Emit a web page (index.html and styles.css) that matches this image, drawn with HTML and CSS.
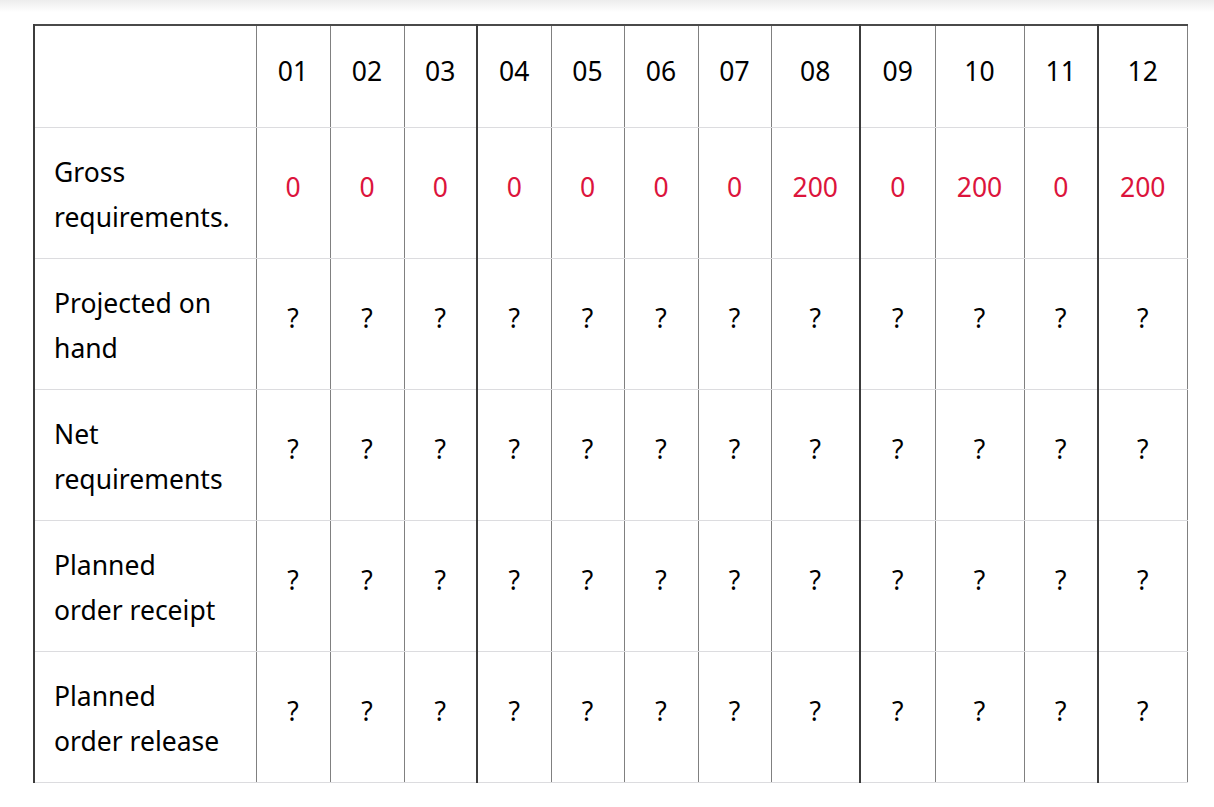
FILE: index.html
```html
<!DOCTYPE html>
<html>
<head>
<meta charset="utf-8">
<link rel="stylesheet" href="styles.css">
</head>
<body>
<div class="topshade"></div>
<div class="wrap">
<table class="mrp">
<colgroup>
<col class="c-label">
<col class="c-n"><col class="c-n"><col class="c-s"><col class="c-n"><col class="c-s"><col class="c-n"><col class="c-s">
<col class="c-w"><col class="c-m"><col class="c-w"><col class="c-n"><col class="c-w">
</colgroup>
<thead>
<tr class="head">
<th class="label"></th>
<th>01</th><th>02</th><th>03</th><th class="q">04</th><th>05</th><th>06</th><th>07</th><th>08</th><th class="q">09</th><th>10</th><th>11</th><th class="q">12</th>
</tr>
</thead>
<tbody>
<tr class="gross">
<td class="label">Gross<br>requirements.</td>
<td>0</td><td>0</td><td>0</td><td class="q">0</td><td>0</td><td>0</td><td>0</td><td>200</td><td class="q">0</td><td>200</td><td>0</td><td class="q">200</td>
</tr>
<tr>
<td class="label">Projected on<br>hand</td>
<td>?</td><td>?</td><td>?</td><td class="q">?</td><td>?</td><td>?</td><td>?</td><td>?</td><td class="q">?</td><td>?</td><td>?</td><td class="q">?</td>
</tr>
<tr>
<td class="label">Net<br>requirements</td>
<td>?</td><td>?</td><td>?</td><td class="q">?</td><td>?</td><td>?</td><td>?</td><td>?</td><td class="q">?</td><td>?</td><td>?</td><td class="q">?</td>
</tr>
<tr>
<td class="label">Planned<br>order receipt</td>
<td>?</td><td>?</td><td>?</td><td class="q">?</td><td>?</td><td>?</td><td>?</td><td>?</td><td class="q">?</td><td>?</td><td>?</td><td class="q">?</td>
</tr>
<tr>
<td class="label">Planned<br>order release</td>
<td>?</td><td>?</td><td>?</td><td class="q">?</td><td>?</td><td>?</td><td>?</td><td>?</td><td class="q">?</td><td>?</td><td>?</td><td class="q">?</td>
</tr>
</tbody>
</table>
</div>
</body>
</html>
```

FILE: styles.css
```css
html, body {
  margin: 0;
  padding: 0;
  background: #fff;
}
body {
  font-family: "Noto Sans", "Open Sans", sans-serif;
  color: #000;
}
.topshade {
  height: 12px;
  background: linear-gradient(#ededed, #fff);
}
.wrap {
  padding: 12px 0 0 33px;
}
.mrp {
  border-collapse: collapse;
  table-layout: fixed;
  width: 1154px;
  font-size: 26.5px;
  line-height: 45px;
  border-top: 2px solid #4a4a4a;
  border-left: 2px solid #3c3c3c;
}
.c-label { width: 222px; }
.c-n { width: 74px; }
.c-s { width: 73px; }
.c-w { width: 89px; }
.c-m { width: 75px; }
.mrp th, .mrp td {
  font-weight: 400;
  text-align: center;
  vertical-align: middle;
  padding: 0;
  border-left: 1px solid #808080;
  border-bottom: 1px solid #dcdcdf;
}
.mrp th:last-child, .mrp td:last-child {
  border-right: 1px solid #808080;
}
.mrp .q {
  border-left: 2px solid #3c3c3c;
}
.mrp .label {
  text-align: left;
  padding-left: 19px;
  padding-right: 4px;
  border-left: 2px solid #3c3c3c;
}
.mrp .head th {
  height: 102px;
  padding-bottom: 10px;
  box-sizing: border-box;
}
.mrp tbody td {
  height: 131px;
  padding-top: 0;
  padding-bottom: 10px;
  box-sizing: border-box;
}
.mrp tbody td.label {
  padding-top: 4px;
  padding-bottom: 0;
}
.gross td {
  color: #dc143c;
}
.gross td.label {
  color: #000;
}
```
